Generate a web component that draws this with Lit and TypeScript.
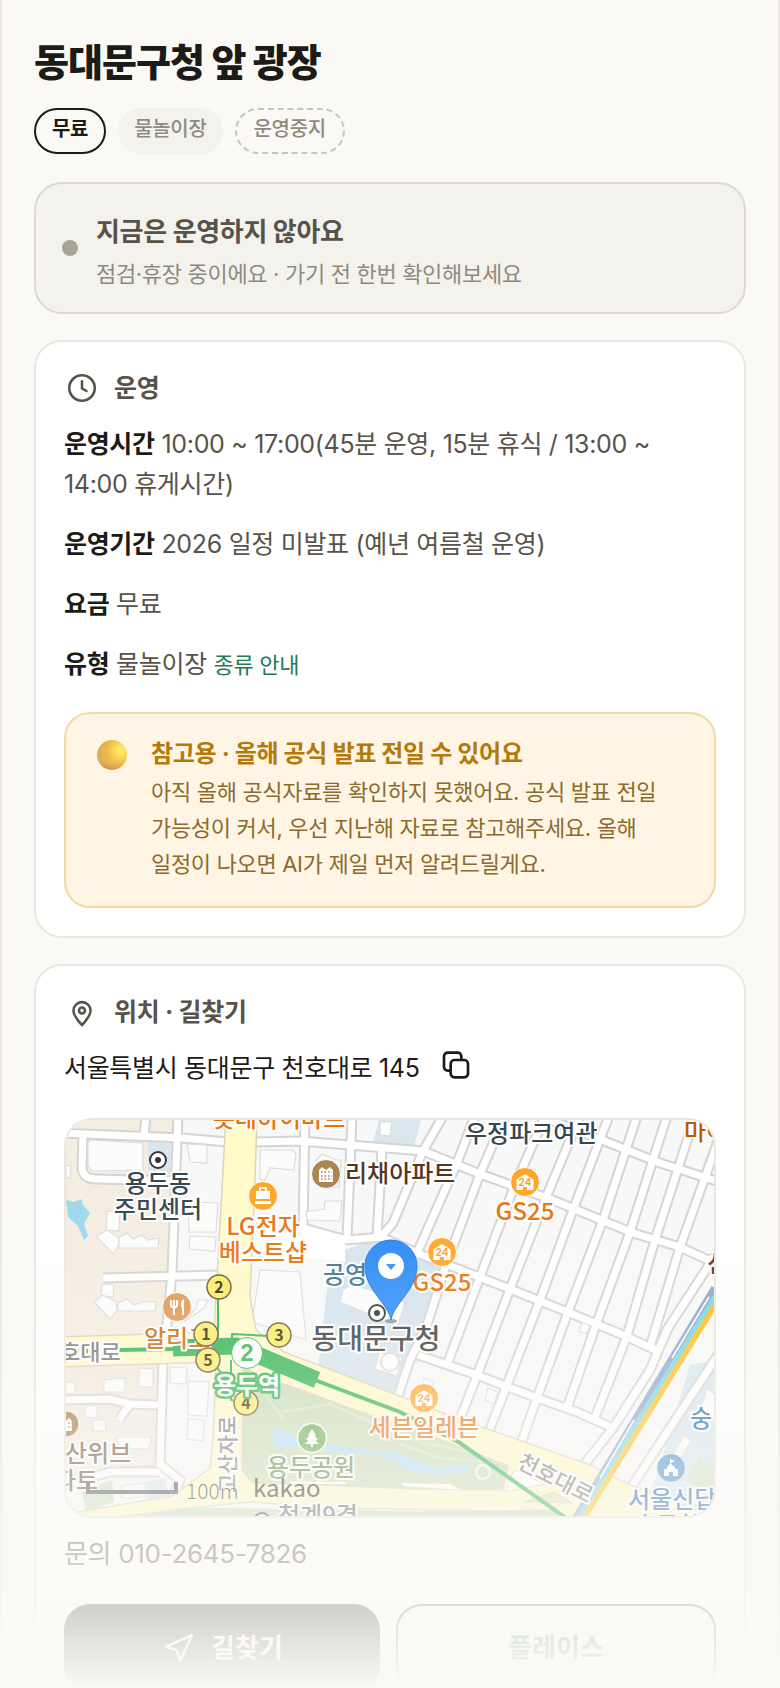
import { LitElement, html, css, svg } from "lit";
import { customElement } from "lit/decorators.js";

type Label = { t: string; x: number; y: number; c: string; s?: number; a?: string; r?: number };

const ROADS = [
  "M60 1133L182 1138L228 1142",
  "M254 1142L300 1141L423 1151L480 1174L550 1199L633 1233L680 1247L708 1260L720 1256",
  "M178 1116L172 1273L165 1345",
  "M83 1135L82 1168Q83 1179 96 1179L174 1181",
  "M146 1116L144 1136",
  "M103 1278L220 1275",
  "M305 1116L303 1230",
  "M352 1116L347 1240",
  "M382 1150L377 1237",
  "M540 1116L607 1142L660 1163L707 1178L720 1182",
  "M300 1227L347 1240L381 1237L417 1253L510 1289L570 1313L623 1335L660 1352",
  "M418 1355L477 1375L537 1398L577 1412L613 1428",
  "M443 1116L423 1151L393 1223L380 1238",
  "M475 1116L457 1163L417 1253",
  "M505 1116L480 1174L447 1262L427 1325L410 1360L396 1402",
  "M545 1116L513 1190L480 1277L448 1362",
  "M580 1116L545 1200L510 1289L478 1373L458 1424",
  "M609 1116L573 1210L540 1300L507 1385L488 1434",
  "M637 1116L603 1220L568 1312L537 1398L520 1446",
  "M667 1116L630 1232L597 1322L567 1408",
  "M695 1116L655 1240L627 1336L594 1420",
  "M722 1130L680 1247L650 1347",
  "M711 1262L668 1328L650 1370L613 1428L580 1470",
  "M66 1400L110 1399L130 1404L158 1405",
  "M130 1404L119 1420",
  "M163 1362L160 1464L180 1480L172 1500",
  "M60 1486L110 1472L160 1472",
  "M626 1495L720 1352",
];

const BUILDINGS = [
  "M90 1140L143 1143L143 1170L92 1171L88 1165L88 1143Z",
  "M187 1144L207 1145L207 1163L190 1162Z",
  "M188 1202L218 1203L216 1232L189 1232Z",
  "M190 1236L216 1237L215 1251L189 1249Z",
  "M107 1211L120 1212L119 1231L106 1230Z",
  "M96 1236L107 1230L119 1238L119 1244L113 1254Z",
  "M119 1237L127 1233L133 1239L142 1235L148 1240L159 1238L158 1248L119 1248Z",
  "M102 1284L114 1285L113 1297L101 1296Z",
  "M94 1302L103 1295L116 1302L117 1310L110 1319Z",
  "M118 1303L127 1299L134 1305L142 1302L156 1302L155 1311L118 1311Z",
  "M66 1165L71 1166L70 1178L66 1178Z",
  "M139 1368L153 1369L153 1387L139 1387Z",
  "M104 1380L125 1378L125 1392L104 1392Z",
  "M66 1382L75 1382L75 1394L66 1393Z",
  "M170 1367L187 1368L186 1384L170 1383Z",
  "M188 1381L209 1382L207 1416L188 1415Z",
  "M188 1419L204 1420L203 1441L187 1439Z",
  "M85 1406L97 1406L97 1418L85 1417Z",
  "M93 1420L106 1420L106 1431L93 1431Z",
  "M116 1437L152 1437L149 1449L120 1448Z",
  "M121 1486L145 1483L144 1497L122 1498Z",
  "M316 1160L322 1154L336 1160L341 1160L339 1187L327 1187Z",
  "M306 1212L324 1209L325 1201L342 1201L340 1221L307 1220Z",
  "M260 1150L292 1150L296 1154L294 1170L270 1168L265 1180L260 1180Z",
  "M380 1122L392 1122L390 1136L380 1135Z",
  "M343 1290L352 1284L405 1302L398 1326L340 1302Z",
  "M379 1352L402 1358L397 1376L375 1369Z",
  "M424 1378L434 1382L431 1390L423 1387Z",
  "M488 1388L498 1392L494 1404L485 1400Z",
  "M582 1322L590 1326L586 1334L579 1331Z",
  "M707 1388L716 1395L716 1420L700 1412Z",
  "M684 1436L692 1440L668 1480L660 1476Z",
];

const LABELS: Label[] = [
  { t: "롯데하이마트", x: 279, y: 1127, c: "#e8720c" },
  { t: "용두동", x: 158, y: 1192, c: "#36474f" },
  { t: "주민센터", x: 158, y: 1218, c: "#36474f" },
  { t: "LG전자", x: 263, y: 1235, c: "#e8720c" },
  { t: "베스트샵", x: 263, y: 1261, c: "#e8720c" },
  { t: "리채아파트", x: 345, y: 1182, c: "#54361f", a: "start" },
  { t: "우정파크여관", x: 465, y: 1142, c: "#36474f", a: "start" },
  { t: "마이", x: 684, y: 1140, c: "#c05a00", a: "start" },
  { t: "GS25", x: 525, y: 1220, c: "#e8720c" },
  { t: "GS25", x: 442, y: 1291, c: "#e8720c" },
  { t: "공영", x: 323, y: 1283, c: "#3f7890", a: "start" },
  { t: "동대문구청", x: 376, y: 1349, c: "#3c3c3c", s: 28 },
  { t: "신", x: 707, y: 1272, c: "#54361f", a: "start" },
  { t: "세븐일레븐", x: 424, y: 1436, c: "#e8720c" },
  { t: "용두공원", x: 311, y: 1476, c: "#5f8a4c" },
  { t: "호대로", x: 60, y: 1360, c: "#777777", s: 22, a: "start" },
  { t: "알리고", x: 144, y: 1347, c: "#cc6a0a", a: "start" },
  { t: "산위브", x: 65, y: 1462, c: "#6b5545", a: "start" },
  { t: "파트", x: 54, y: 1489, c: "#6b5545", a: "start" },
  { t: "고산자로", x: 235, y: 1493, c: "#777777", s: 21, a: "start", r: -90 },
  { t: "천호대로", x: 516, y: 1467, c: "#777777", s: 22, a: "start", r: 27 },
  { t: "숭", x: 690, y: 1427, c: "#1f65ad", a: "start" },
  { t: "서울신답", x: 628, y: 1508, c: "#1f65ad", a: "start" },
  { t: "초등학교", x: 634, y: 1534, c: "#1f65ad", a: "start" },
  { t: "청계9경", x: 318, y: 1524, c: "#52626a" },
];

const EXITS = [
  { n: "2", x: 219, y: 1287 },
  { n: "1", x: 206, y: 1334 },
  { n: "3", x: 279, y: 1335 },
  { n: "5", x: 208, y: 1360 },
  { n: "4", x: 246, y: 1403 },
];

const STORES = [
  { x: 525, y: 1182 },
  { x: 442, y: 1252 },
  { x: 424, y: 1398 },
];

@customElement("place-map")
export class PlaceMap extends LitElement {
  static styles = css`
    :host {
      display: block;
      box-sizing: border-box;
      height: 400px;
      border: 2px solid #e9e7e0;
      border-radius: 28px;
      overflow: hidden;
      letter-spacing: normal;
    }
    .canvas {
      display: block;
      width: 100%;
      height: 100%;
      font-family: "Noto Sans CJK KR", sans-serif;
    }
    .casing { fill: none; stroke: #d4d4d4; stroke-width: 11; }
    .road { fill: none; stroke: #ffffff; stroke-width: 7; }
    .block { stroke: #d4d4d4; stroke-width: 1.5; }
    .building { fill: #fcfcfc; stroke: #dcdcdc; stroke-width: 1.2; }
    .label {
      font-weight: 500;
      stroke: #ffffff;
      stroke-width: 4;
      stroke-linejoin: round;
      paint-order: stroke;
    }
    .station {
      font-size: 24px;
      font-weight: 700;
      fill: #ffffff;
      stroke: #2eb34f;
      stroke-width: 5;
      stroke-linejoin: round;
      paint-order: stroke;
    }
    .exit { font: 700 16px "Noto Sans CJK KR", sans-serif; fill: #3a2a18; }
    .line { font: 700 24px "Liberation Sans", sans-serif; fill: #2eb34f; }
    .shop { font: 700 10px Inter, sans-serif; fill: #ff9f1c; }
    .scale { font: 300 21px "Noto Sans CJK KR", sans-serif; fill: #333333; }
    .brand { font: 400 24px "Noto Sans CJK KR", sans-serif; fill: #222222; }
  `;

  render() {
    return html`
      <svg class="canvas" viewBox="66 1120 648 396" preserveAspectRatio="xMidYMid slice" role="img" aria-label="지도">
        <defs>
          <linearGradient id="pin" x1="0" y1="0" x2="0" y2="1">
            <stop offset="0" stop-color="#2888f4" />
            <stop offset="1" stop-color="#3391fb" />
          </linearGradient>
        </defs>
        <rect x="60" y="1110" width="660" height="410" fill="#f8f8f8" />
        <path class="block" fill="#f4ede1" d="M60 1110H174L168 1345H60Z" />
        <path class="block" fill="#f3eadf" d="M60 1364H160L157 1466L110 1468L60 1482Z" />
        <path fill="#d9e6ee" d="M148 1141L171 1143L170 1174L148 1173Z" />
        <path fill="#d9e6ee" d="M380 1116H422L414 1146L372 1145Z" />
        <path fill="#d6e4ef" d="M345 1250L378 1238L446 1264L425 1325L397 1396L318 1366L327 1290Z" />
        <path fill="#d6e6f2" d="M690 1365L716 1360V1520H640L655 1480Z" />
        <path fill="#cfe0c0" d="M700 1458L716 1470V1500L686 1480Z" />
        <path fill="#c9dfba" d="M82 1492L112 1480L114 1502L86 1512Z" />
        <path fill="#d6e4ef" d="M145 1482L166 1478L168 1498L148 1502Z" />
        <path fill="#9fd7ec" d="M66 1200L74 1202L81 1199L83 1205L90 1213L84 1224L88 1236L84 1240L78 1226L68 1217Z" />

        ${ROADS.map((d) => svg`<path class="casing" d=${d} />`)}
        ${ROADS.map((d) => svg`<path class="road" d=${d} />`)}
        ${BUILDINGS.map((d) => svg`<path class="building" d=${d} />`)}
        <path fill="#ffffff" d="M257 1228L300 1226L345 1240L345 1262L310 1258L256 1262Z" />
        <path class="building" d="M260 1270L300 1272L306 1340L252 1322Z" />
        <circle cx="390" cy="1362" r="9" fill="#ffffff" stroke="#dcdcdc" stroke-width="2" />
        <path class="building" d="M198 1300L208 1300L204 1308L184 1322L196 1308Z" />

        <path class="block" fill="#c9ddb7" d="M130 1518L190 1508L300 1510L420 1512L560 1509L570 1520H130Z" />
        <path
          fill="#fffac8"
          stroke="#dfd3b8"
          stroke-width="1.5"
          d="M226 1116H257L255 1180L250 1296L256 1330L284 1352L397 1395L453 1417L590 1465L626 1483L720 1520H560L555 1510L500 1511L330 1508L250 1502L190 1508L80 1522L66 1514L172 1496L210 1468L213 1440L216 1362L60 1367V1337L214 1332L217 1280Z"
        />
        <path
          fill="#cadcb8"
          stroke="#dfd3b8"
          stroke-width="1.5"
          d="M243 1366L262 1378L290 1386L380 1419L447 1442L508 1466L503 1490L420 1489L290 1484L252 1483L242 1470Z"
        />
        <path
          fill="#b4dff5"
          d="M274 1428L292 1434L300 1442L340 1446L378 1452L392 1450L420 1462L436 1468L470 1464L468 1472L432 1475L412 1472L392 1460L376 1456L340 1452L300 1448L274 1448Z"
        />
        <path fill="none" stroke="#d8e7cb" stroke-width="2.5" d="M282 1412L330 1404L380 1426L420 1442L470 1452M262 1390L284 1420M400 1444L440 1458L490 1462" />
        <circle cx="483" cy="1472" r="7" fill="#cbdcba" stroke="#f2f6ee" stroke-width="2.5" />
        <path fill="#ffffff" d="M290 1481L346 1482V1484L290 1484ZM402 1483L450 1484L462 1490L402 1486Z" />
        <path fill="#ffffff" stroke="#dfd3b8" d="M514 1470L545 1484L505 1492Z" />
        <path fill="#dbe2b8" stroke="#dfd3b8" d="M554 1492L572 1503L524 1502Z" />

        <path fill="none" stroke="#8ea6cf" stroke-width="8" d="M715 1288L575 1520" />
        <path fill="none" stroke="#7fd4d8" stroke-width="5" d="M716 1295L577 1520" />
        <path fill="none" stroke="#ffffff" stroke-width="1.5" d="M709 1297L672 1358M634 1420L600 1478" />
        <path fill="none" stroke="#ffbe22" stroke-width="5" d="M719 1299L583 1520" />

        <path fill="none" stroke="#2eb34f" stroke-width="4" d="M118 1350L175 1349M312 1379L400 1412L460 1443L566 1518" />
        <path fill="none" stroke="#2eb34f" stroke-width="4" stroke-dasharray="4 5" d="M66 1351H118" />
        <path fill="none" stroke="#2eb34f" stroke-width="17" d="M173 1348L236 1346L317 1380" />
        <path fill="none" stroke="#2eb34f" stroke-width="2" d="M218 1298V1340M206 1340L175 1341M232 1346V1334L270 1336M215 1366L232 1384M231 1360V1400L240 1402" />

        ${LABELS.map(
          (l) => svg`<text class="label" x=${l.x} y=${l.y} fill=${l.c} font-size=${l.s ?? 24}
            text-anchor=${l.a ?? "middle"} transform="rotate(${l.r ?? 0} ${l.x} ${l.y})">${l.t}</text>`,
        )}

        ${STORES.map(
          (p) => svg`<g transform="translate(${p.x} ${p.y})">
            <circle r="14.5" fill="#ffa629" stroke="#ffffff" />
            <path fill="#ffffff" d="M0 -8L8.5 -2.5V8H2V5H-2V8H-8.5V-2.5Z" />
            <text class="shop" text-anchor="middle" y="4">24</text>
          </g>`,
        )}
        <g transform="translate(263 1196)">
          <circle r="14.5" fill="#ffa629" stroke="#ffffff" />
          <path fill="#ffffff" d="M-7 -5H7V3H-7ZM-8 5H8V8H-8Z" />
          <path fill="none" stroke="#ffffff" stroke-width="2" d="M-3 -5V-8H3V-5" />
        </g>
        <g transform="translate(177 1307)">
          <circle r="14.5" fill="#df9a52" stroke="#ffffff" />
          <path fill="none" stroke="#ffffff" stroke-width="2" d="M-6 -7V-1Q-3 2 0 -1V-7M-3 -7V8" />
          <path fill="#ffffff" d="M4 0Q3 -6 7 -8V8H5V1Z" />
        </g>
        <g transform="translate(326 1174)">
          <circle r="14.5" fill="#ad854f" stroke="#ffffff" />
          <path fill="#ffffff" d="M-7 8V-4L-4 -7L0 -4L4 -7L7 -4V8Z" />
          <path stroke="#ad854f" stroke-width="1.5" stroke-dasharray="1.5 2" d="M-5 -2H6M-5 2H6M-5 5H6" />
        </g>
        <g transform="translate(66 1424)">
          <circle r="13" fill="#a2783e" stroke="#ffffff" />
          <path fill="#ffffff" d="M-7 7V-3L-3 -6L0 -3L3 -6L6 -3V7Z" />
          <path stroke="#a2783e" stroke-width="1.5" stroke-dasharray="1.5 2" d="M-5 -1H6M-5 3H6" />
        </g>
        <g transform="translate(312 1438)">
          <circle r="14.5" fill="#6dae50" stroke="#ffffff" stroke-width="1.5" />
          <path fill="#ffffff" d="M0 -9L4 -3H2.5L6 2H3.5L7 6H1V9H-1V6H-7L-3.5 2H-6L-2.5 -3H-4Z" />
        </g>
        <g transform="translate(671 1468)">
          <circle r="14.5" fill="#4a90cf" stroke="#ffffff" />
          <path fill="#ffffff" d="M-1 -9L4 -7L0 -5V-4L4 -1V1H7V8H2V4H-2V8H-7V1H-4V-1L-1 -4Z" />
        </g>
        <g fill="#ffffff" stroke="#3a3a3a" stroke-width="2">
          <circle cx="158" cy="1160" r="8" />
          <circle cx="377" cy="1313" r="8" />
          <circle cx="262" cy="1521" r="8" />
        </g>
        <circle cx="158" cy="1160" r="3" fill="#333333" />
        <circle cx="377" cy="1313" r="3" fill="#333333" />

        ${EXITS.map(
          (e) => svg`<circle cx=${e.x} cy=${e.y} r="12" fill="#fbee66" stroke="#6d5535" stroke-width="1.5" />
            <text class="exit" x=${e.x} y=${e.y + 6} text-anchor="middle">${e.n}</text>`,
        )}
        <circle cx="247" cy="1353" r="15.5" fill="#ffffff" stroke="#2eb34f" />
        <text class="line" x="247" y="1361" text-anchor="middle">2</text>
        <text class="station" x="247" y="1394" text-anchor="middle">용두역</text>

        <ellipse cx="391" cy="1321" rx="6" ry="2" fill="#555555" opacity="0.6" />
        <path
          fill="url(#pin)"
          stroke="#2273cf"
          d="M391 1320C388 1303 365 1290 365 1266A26 26 0 0 1 417 1266C417 1290 394 1303 391 1320Z"
        />
        <circle cx="391" cy="1266" r="13" fill="#ffffff" />
        <path fill="#2f8ef7" d="M386 1264H396L391 1270Z" />

        <path fill="none" stroke="#4a4a4a" stroke-width="4" d="M88 1482V1492H176V1482" />
        <text class="scale" x="186" y="1499">100m</text>
        <text class="brand" x="253" y="1497">kakao</text>
      </svg>
    `;
  }
}

@customElement("app-root")
export class AppRoot extends LitElement {
  static styles = css`
    :host {
      display: block;
      position: relative;
      height: 100vh;
      overflow: hidden;
      background: #faf9f5;
      color: #1c1b17;
      font-family: Inter, "Noto Sans CJK KR", sans-serif;
      font-size: 32px;
      letter-spacing: -0.01em;
      word-break: keep-all;
    }
    * { box-sizing: border-box; }
    h1, h2, p { margin: 0; }
    .page {
      height: 100%;
      overflow-y: auto;
      scrollbar-width: none;
      padding: 32px;
      border: solid #e9e7e0;
      border-width: 0 2px;
      display: flex;
      flex-direction: column;
      gap: 26px;
      font-size: 25px;
      line-height: 40px;
    }
    .page > * { flex: none; }
    .head { display: grid; gap: 16px; padding-bottom: 2px; }
    .title { font-size: 38px; line-height: 60px; font-weight: 800; letter-spacing: -0.025em; }
    .tags { display: flex; gap: 12px; }
    .tag {
      height: 46px;
      padding: 0 16px 4px;
      border: 2px solid transparent;
      border-radius: 23px;
      display: flex;
      align-items: center;
      font-size: 20px;
      font-weight: 500;
      color: #8f8a7e;
    }
    .free { border-color: #1c1b17; color: #1c1b17; font-weight: 700; }
    .kind { background: #f3f2ed; border: 0; }
    .closed { padding: 0 17px 4px; border: 2px dashed #c9c6bb; }
    .status {
      display: flex;
      align-items: center;
      gap: 18px;
      padding: 20px 26px;
      border: 2px solid #dbd9d0;
      border-radius: 28px;
      background: #f3f2ed;
    }
    .dot { flex: none; width: 16px; height: 16px; border-radius: 50%; background: #a8a498; }
    .status-body { display: grid; gap: 4px; padding-top: 8px; }
    .status-title { font-size: 26px; font-weight: 700; color: #57534a; }
    .status-text { font-size: 22px; line-height: 36px; color: #8f8a7e; }
    .card {
      padding: 28px;
      border: 2px solid #e9e7e0;
      border-radius: 28px;
      background: #ffffff;
    }
    .card-head {
      display: flex;
      align-items: center;
      gap: 14px;
      height: 36px;
      margin-bottom: 18px;
      color: #57534a;
    }
    .card-title { font-size: 25px; line-height: 36px; font-weight: 700; }
    .icon {
      width: 36px;
      height: 36px;
      fill: none;
      stroke: currentColor;
      stroke-width: 1.7;
      stroke-linecap: round;
      stroke-linejoin: round;
    }
    .rows { display: grid; gap: 20px; color: #57534a; }
    .rows strong { color: #1c1b17; font-weight: 700; }
    .guide { font-size: 22px; line-height: 22px; color: #1f7a55; text-decoration: none; }
    .notice {
      display: flex;
      gap: 24px;
      margin-top: 28px;
      padding: 20px 32px 24px 31px;
      border: 2px solid #f0dba4;
      border-radius: 26px;
      background: #fff5e4;
    }
    .orb {
      flex: none;
      width: 30px;
      height: 30px;
      margin-top: 6px;
      border-radius: 50%;
      background:
        radial-gradient(circle at 78% 35%, #ffe863 0 8%, rgba(245, 195, 65, 0.7) 45%, rgba(220, 160, 60, 0) 80%),
        linear-gradient(#d9a95c 0 75%, #d4784f 100%);
    }
    .notice-title { font-size: 24px; font-weight: 700; color: #b4790a; }
    .notice-text { font-size: 22px; line-height: 36px; color: #8c6a2c; }
    .address { display: flex; align-items: center; gap: 20px; height: 40px; }
    .copy { display: flex; height: 36px; padding: 0; border: 0; background: none; color: #1c1b17; }
    .copy .icon { width: 32px; height: 32px; stroke-width: 2; }
    .map { margin-top: 30px; }
    .contact { margin-top: 16px; font-size: 26px; color: #57534a; }
    .actions { display: flex; gap: 16px; margin-top: 30px; }
    .action {
      flex: 1 1 0;
      box-sizing: content-box;
      height: 88px;
      padding: 0;
      border: 0;
      border-radius: 26px;
      display: flex;
      align-items: center;
      justify-content: center;
      gap: 14px;
      font: 700 26px/40px Inter, "Noto Sans CJK KR", sans-serif;
    }
    .primary { background: #1c1b17; color: #ffffff; }
    .secondary { height: 84px; border: 2px solid #1f7a55; background: #ffffff; color: #1f7a55; }
    .fade {
      position: absolute;
      inset: auto 0 0;
      height: 30%;
      pointer-events: none;
      background: linear-gradient(
        rgba(250, 249, 245, 0),
        rgba(250, 249, 245, 0.14) 25%,
        rgba(250, 249, 245, 0.46) 50%,
        rgba(250, 249, 245, 0.72) 75%,
        rgba(250, 249, 245, 0.82) 84%,
        #faf9f5
      );
    }
  `;

  render() {
    return html`
      <main class="page">
        <header class="head">
          <h1 class="title">동대문구청 앞 광장</h1>
          <div class="tags">
            <span class="tag free">무료</span>
            <span class="tag kind">물놀이장</span>
            <span class="tag closed">운영중지</span>
          </div>
        </header>

        <section class="status">
          <span class="dot"></span>
          <div class="status-body">
            <p class="status-title">지금은 운영하지 않아요</p>
            <p class="status-text">점검·휴장 중이에요 · 가기 전 한번 확인해보세요</p>
          </div>
        </section>

        <section class="card">
          <div class="card-head">
            <svg class="icon" viewBox="0 0 24 24" aria-hidden="true">
              <circle cx="12" cy="12" r="8.5" />
              <path d="M12 7.5V12.3L15 14" />
            </svg>
            <h2 class="card-title">운영</h2>
          </div>
          <div class="rows">
            <p><strong>운영시간</strong> 10:00 ~ 17:00(45분 운영, 15분 휴식 / 13:00 ~ 14:00 휴게시간)</p>
            <p><strong>운영기간</strong> 2026 일정 미발표 (예년 여름철 운영)</p>
            <p><strong>요금</strong> 무료</p>
            <p><strong>유형</strong> 물놀이장 <a class="guide" href="#kinds">종류 안내</a></p>
          </div>
          <aside class="notice">
            <span class="orb"></span>
            <div>
              <p class="notice-title">참고용 · 올해 공식 발표 전일 수 있어요</p>
              <p class="notice-text">
                아직 올해 공식자료를 확인하지 못했어요. 공식 발표 전일 가능성이 커서, 우선 지난해 자료로 참고해주세요. 올해
                일정이 나오면 AI가 제일 먼저 알려드릴게요.
              </p>
            </div>
          </aside>
        </section>

        <section class="card">
          <div class="card-head">
            <svg class="icon" viewBox="0 0 24 24" aria-hidden="true">
              <path d="M12 20.8C9.5 18 6.3 14.3 6.3 11.1A5.7 5.7 0 0 1 17.7 11.1C17.7 14.3 14.5 18 12 20.8Z" />
              <circle cx="12" cy="11" r="2" />
            </svg>
            <h2 class="card-title">위치 · 길찾기</h2>
          </div>
          <div class="address">
            <span>서울특별시 동대문구 천호대로 145</span>
            <button class="copy" type="button" aria-label="주소 복사">
              <svg class="icon" viewBox="0 0 24 24" aria-hidden="true">
                <rect x="8" y="7.5" width="13" height="13" rx="2.8" />
                <path d="M8 15.5H5.8A2.8 2.8 0 0 1 3 12.7V4.8A2.8 2.8 0 0 1 5.8 2H13.2A2.8 2.8 0 0 1 16 4.8V7.5" />
              </svg>
            </button>
          </div>
          <place-map class="map"></place-map>
          <p class="contact">문의 010-2645-7826</p>
          <div class="actions">
            <button class="action primary" type="button">
              <svg class="icon" viewBox="0 0 24 24" aria-hidden="true">
                <path d="M20.5 3.5L3.5 11L10.5 13.5L13 20.5Z" />
              </svg>
              길찾기
            </button>
            <button class="action secondary" type="button">플레이스</button>
          </div>
        </section>
      </main>
      <div class="fade"></div>
    `;
  }
}
